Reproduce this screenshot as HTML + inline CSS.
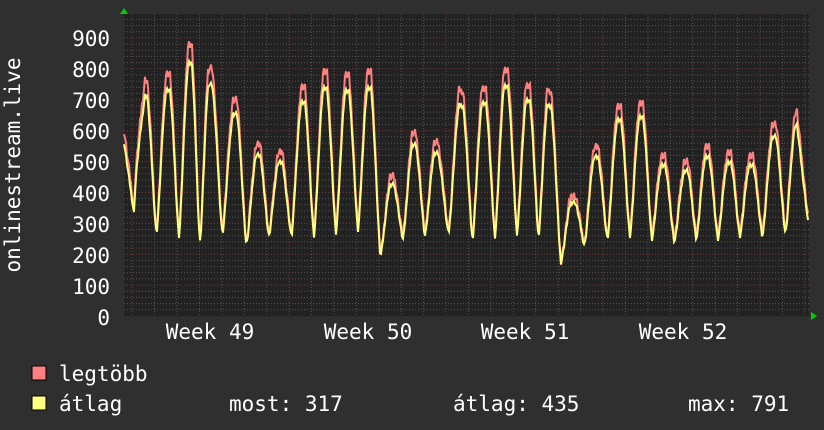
<!DOCTYPE html><html><head><meta charset="utf-8"><style>
html,body{margin:0;padding:0;background:#2f2f2f;width:824px;height:430px;overflow:hidden}
svg{display:block}
text{font-family:"DejaVu Sans Mono","Liberation Mono",monospace;fill:#fff;font-size:21px}
</style></head><body>
<svg id="s" width="824" height="430" xmlns="http://www.w3.org/2000/svg">
<rect x="0" y="0" width="824" height="430" fill="#2f2f2f"/>
<rect x="124" y="14" width="685" height="302" fill="#222"/>
<g id="grid"></g>
<g id="lines"></g>
<polygon points="120,14 128,14 124,8" fill="#0c0"/>
<polygon points="811,312 811,320 817,316" fill="#0c0"/>
<g text-anchor="end">
<text x="110" y="46">900</text><text x="110" y="77">800</text><text x="110" y="108">700</text>
<text x="110" y="139">600</text><text x="110" y="170">500</text><text x="110" y="201">400</text>
<text x="110" y="232">300</text><text x="110" y="263">200</text><text x="110" y="294">100</text>
<text x="110" y="325">0</text></g>
<text transform="translate(20,165) rotate(-90)" text-anchor="middle">onlinestream.live</text>
<g text-anchor="middle"><text x="210" y="339">Week 49</text><text x="368" y="339">Week 50</text>
<text x="525" y="339">Week 51</text><text x="683" y="339">Week 52</text></g>
<rect x="32" y="366" width="14" height="14" fill="#ff8080" stroke="#000" stroke-width="1"/>
<rect x="32" y="396" width="14" height="14" fill="#ffff80" stroke="#000" stroke-width="1"/>
<text x="59" y="381">legtöbb</text>
<text x="59" y="411">átlag</text>
<text x="229" y="411">most: 317</text>
<text x="453" y="411">átlag: 435</text>
<text x="688" y="411">max: 791</text>
</svg>
<script>
var ns="http://www.w3.org/2000/svg",g=document.getElementById('grid'),L=document.getElementById('lines');
function ln(x1,y1,x2,y2,c){var l=document.createElementNS(ns,'line');l.setAttribute('x1',x1);l.setAttribute('y1',y1);l.setAttribute('x2',x2);l.setAttribute('y2',y2);l.setAttribute('stroke',c);l.setAttribute('stroke-dasharray','1,2');g.appendChild(l);}
function Y(v){return 316-v*0.309;}
for(var v=20;v<=960;v+=20){var y=Y(v);if(y<14)break;ln(124,y.toFixed(1),809,y.toFixed(1),v%100==0?'#7a3a3a':'#555');}
for(var x=132-22.43;x<809;x+=22.43){if(x<124)continue;var wk=Math.abs(((x-132)/157)-Math.round((x-132)/157))<0.02;ln(x.toFixed(1),14,x.toFixed(1),316,wk?'#7a3a3a':'#555');}
var peaks=[[145,765],[168,785],[190,880],[210,805],[235,700],[258,555],[280,530],[303,740],[325,790],[347,780],[369,790],[392,450],[414,590],[436,560],[461,730],[484,740],[506,800],[528,750],[549,730],[573,390],[596,550],[619,680],[641,690],[663,520],[686,500],[707,550],[729,530],[751,520],[774,620],[797,660]];
var mins=[280,270,250,280,240,270,270,270,280,290,200,260,270,280,260,270,280,270,180,240,260,270,260,250,260,260,270,270,280];
var ptsR=[],ptsY=[];
for(var x=124;x<=808;x++){
 var i=0;while(i<peaks.length-1&&peaks[i+1][0]<=x)i++;
 var v;
 if(x<peaks[0][0]){if(x<134)v=600-(x-124)*25;else v=350+(peaks[0][1]-350)*Math.pow((x-134)/(peaks[0][0]-134),0.7);}
 else if(i>=peaks.length-1){var p=peaks[peaks.length-1];v=p[1]-(p[1]-320)*Math.min(1,(x-p[0])/11);}
 else{var a=peaks[i],b=peaks[i+1],m=mins[i]||270,t=(x-a[0])/(b[0]-a[0]);
  var c=0.5+0.5*Math.cos(Math.PI*2*t);c=Math.min(1,Math.pow(c,0.7)*1.05);
  var pk=t<0.5?a[1]:b[1];v=m+(pk-m)*c;}
 var n=((x*37)%11-5)*3;
 ptsR.push(x+','+Y(v+n).toFixed(1));
 ptsY.push(x+','+Y(v-10-(v-250)*0.08+n*0.5).toFixed(1));
}
function pl(p,c){var e=document.createElementNS(ns,'polyline');e.setAttribute('points',p.join(' '));e.setAttribute('fill','none');e.setAttribute('stroke',c);e.setAttribute('stroke-width','2');L.appendChild(e);}
pl(ptsR,'#ff8080');pl(ptsY,'#ffff80');
</script>
</body></html>
